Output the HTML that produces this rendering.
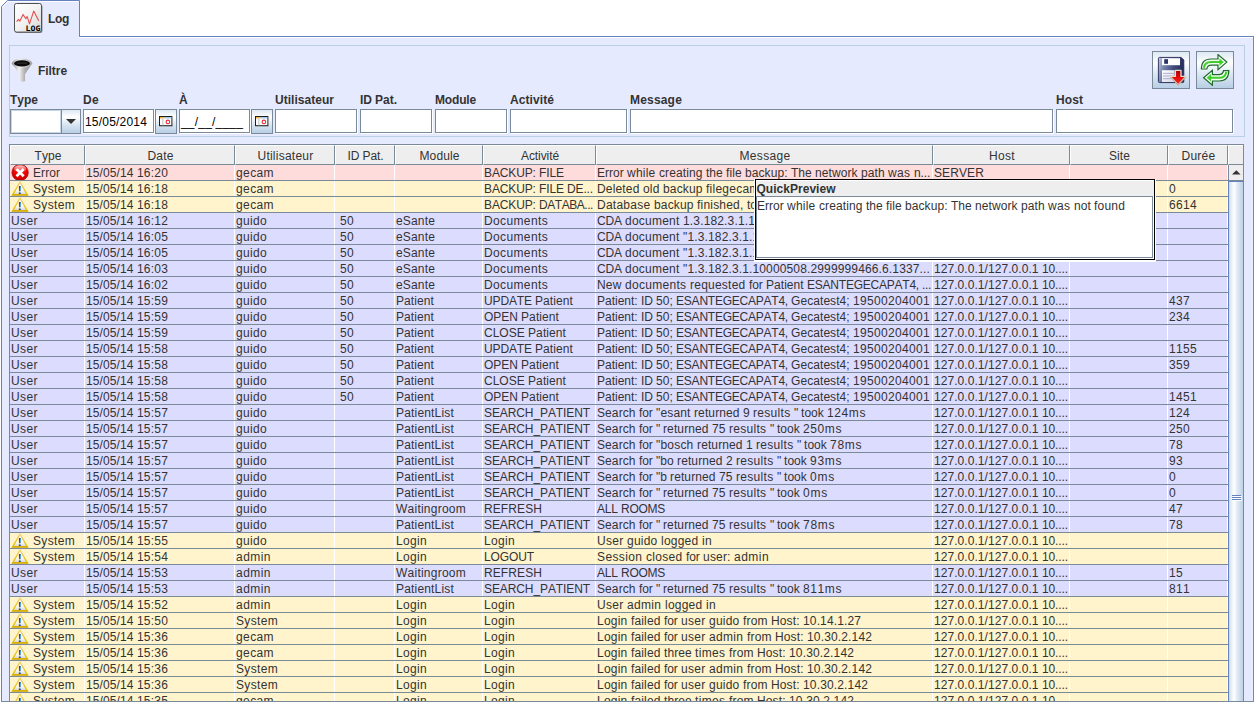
<!DOCTYPE html>
<html><head><meta charset="utf-8"><title>Log</title>
<style>
html,body{margin:0;padding:0;}
body{width:1254px;height:702px;overflow:hidden;background:#fff;position:relative;font-family:"Liberation Sans",Arial,sans-serif;font-size:12px;color:#333333;font-kerning:none;}
.abs{position:absolute;}
#content{position:absolute;left:1px;top:36px;width:1251px;height:664px;background:#e6eaff;border:1px solid #6382bf;border-right-color:#7a8a99;border-bottom-color:#7a8a99;box-sizing:content-box;}
#tab{position:absolute;left:0;top:0;width:81px;height:38px;}
.b{font-weight:bold;}
.lbl{position:absolute;font-weight:bold;white-space:nowrap;line-height:14px;height:14px;}
.tf{position:absolute;top:109px;height:24px;box-sizing:border-box;background:#fff;border:1px solid #7a8a99;box-shadow:1px 1px 0 #fff; }
.tf span{position:absolute;color:#000;left:1px;top:5px;line-height:14px;white-space:pre;}
.btn{position:absolute;box-sizing:border-box;border:1px solid #7a8a99;background:linear-gradient(to bottom,#dde8f3 0%,#ffffff 30%,#dde8f3 60%,#b8cfe5 100%);}
#filter{position:absolute;left:9px;top:45px;width:1234px;height:90px;border:1px solid #b8cfe5;}
#sp{position:absolute;left:9px;top:144px;width:1233px;height:600px;border:1px solid #7a8a99;background:#fff;}
.hc{position:absolute;top:145px;height:20px;box-sizing:border-box;background:#eee;border-top:1px solid #fff;border-left:1px solid #fff;border-bottom:1px solid #7a8a99;border-right:1px solid #7a8a99;text-align:center;line-height:20px;white-space:nowrap;overflow:hidden;padding-left:1px;}
.row{position:absolute;left:10px;width:1218px;height:15px;border-bottom:1px solid #7a8a99;overflow:hidden;}
.c{position:absolute;top:0;height:15px;line-height:17px;white-space:pre;overflow:hidden;box-sizing:border-box;padding-left:1px;border-right:1px solid #fff;}
.ticon{position:absolute;}
i{font-style:normal;}
</style></head><body>

<div id="content"></div>
<div class="abs" style="left:79px;top:37px;width:1174px;height:1px;background:#fff;"></div>
<svg id="tab" viewBox="0 0 81 38" width="81" height="38"><path d="M1.5 38 V6.5 L7.5 0.5 H79.5 V36.5" fill="#e6eaff" stroke="#6382bf" stroke-width="1"/><path d="M2.6 7.4 L8 1.5 H78.5" fill="none" stroke="#fff" stroke-opacity="0.9" stroke-width="1"/><rect x="2" y="36" width="77" height="2" fill="#e6eaff"/></svg>
<svg class="abs" style="left:13px;top:2px" width="31" height="33" viewBox="0 0 31 33">
<defs><linearGradient id="lg1" x1="0" y1="0" x2="1" y2="1"><stop offset="0" stop-color="#ffffff"/><stop offset="0.5" stop-color="#f2f2f2"/><stop offset="1" stop-color="#d4d4d4"/></linearGradient></defs>
<rect x="2.3" y="2.4" width="27.2" height="28.7" rx="2.2" fill="#555" opacity="0.6"/>
<rect x="1.5" y="1.5" width="27" height="28.6" rx="2" fill="url(#lg1)" stroke="#505050" stroke-width="1"/>
<polyline points="3.6,19.8 5.4,17.4 6.9,19.1 10.1,12.4 12.8,16.8 14.1,14.4 16.5,21.8 20.7,9.1 25.7,18.8" fill="none" stroke="#e43c3c" stroke-width="1.05" stroke-linejoin="round" stroke-opacity="0.92"/>
<text x="12.6" y="28.9" font-family="DejaVu Sans Mono, Liberation Mono, monospace" font-weight="bold" font-size="7.5" fill="#000" textLength="15" lengthAdjust="spacingAndGlyphs">LOG</text>
</svg>
<div class="lbl" style="left:48px;top:12px;letter-spacing:-0.33px;">Log</div>
<div id="filter"></div>
<svg class="abs" style="left:10px;top:57px" width="24" height="26" viewBox="0 0 24 26">
<defs><linearGradient id="fg" x1="0" y1="0" x2="1" y2="0"><stop offset="0" stop-color="#8a8a8a"/><stop offset="0.35" stop-color="#f4f4f4"/><stop offset="0.62" stop-color="#b4b4b4"/><stop offset="1" stop-color="#8c8c8c"/></linearGradient>
<linearGradient id="fg2" x1="0" y1="0" x2="1" y2="0"><stop offset="0" stop-color="#9a9a9a"/><stop offset="0.4" stop-color="#eeeeee"/><stop offset="1" stop-color="#a0a0a0"/></linearGradient></defs>
<path d="M2 6.4 L9.8 17.2 V23.9 Q12.4 25.6 15.1 23.9 V17.2 L22 6.4 Z" fill="url(#fg)"/>
<ellipse cx="12" cy="6.2" rx="10.2" ry="4.6" fill="url(#fg2)"/>
<ellipse cx="12" cy="6.4" rx="7.9" ry="3.1" fill="#0a0a0a"/>
<path d="M7 6.1 H17" stroke="#555" stroke-width="0.6"/>
</svg>
<div class="lbl" style="left:38px;top:64px;letter-spacing:-0.056px;">Filtre</div>
<div class="btn" style="left:1152px;top:51px;width:38px;height:38px;"><svg class="abs" style="left:4px;top:4px" width="30" height="30" viewBox="0 0 30 30">
<defs><linearGradient id="fl" x1="0" y1="0" x2="1" y2="0.25"><stop offset="0" stop-color="#c4c8dc"/><stop offset="0.1" stop-color="#aab2cc"/><stop offset="0.3" stop-color="#7482aa"/><stop offset="0.65" stop-color="#424c7c"/><stop offset="1" stop-color="#262c5c"/></linearGradient>
<linearGradient id="ra" x1="0" y1="0" x2="0" y2="1"><stop offset="0" stop-color="#a80000"/><stop offset="0.45" stop-color="#e00808"/><stop offset="1" stop-color="#ff3030"/></linearGradient>
<linearGradient id="ll" x1="0" y1="0" x2="1" y2="1"><stop offset="0" stop-color="#ffffff"/><stop offset="1" stop-color="#d4d6e4"/></linearGradient></defs>
<path d="M1.4 2.6 Q1.4 1.4 2.6 1.4 H24.2 L26.8 4 V25.4 Q26.8 26.6 25.6 26.6 H2.6 Q1.4 26.6 1.4 25.4 Z" fill="url(#fl)" stroke="#26285a" stroke-width="0.9"/>
<rect x="5" y="2.2" width="18" height="7" fill="#fff"/>
<rect x="7.2" y="3.2" width="3.8" height="4.6" fill="#2a3366"/>
<rect x="5" y="14.2" width="12.6" height="11.8" fill="url(#ll)"/>
<path d="M6 17.4 H17 M6 20 H17 M6 22.7 H17" stroke="#a8a8d0" stroke-width="0.9"/>
<path d="M18.4 14.4 H24 V20.4 H28.8 L21.1 29 L13.4 20.4 H18.4 Z" fill="url(#ra)" stroke="#e8dcc8" stroke-width="1.3" stroke-linejoin="round"/>
<path d="M13.6 21 L21.1 29.3 L28.6 21" fill="none" stroke="#8a6a40" stroke-width="0.7" stroke-opacity="0.7"/>
</svg></div>
<div class="btn" style="left:1196px;top:51px;width:38px;height:38px;"><svg class="abs" style="left:2px;top:2px" width="32" height="32" viewBox="0 0 32 32">
<g fill="#f2fff2" stroke="#1d6a2a" stroke-width="1.2" stroke-linejoin="miter">
<path d="M2.4 15 Q2.4 5 12 5 H19 V0.6 L27.8 8.1 L19 15.6 V11.2 H12.5 Q8.4 11.2 7.8 15 Z"/>
<path d="M29.8 16.6 Q29.8 27 20.2 27 H13.4 V31.2 L4.6 23.7 L13.4 16.2 V20.6 H19.8 Q24 20.6 24.5 16.6 Z"/>
</g>
<g fill="none" stroke="#3fcf2a" stroke-width="2">
<path d="M5 13.8 Q5.6 8.1 12 8.1 H21"/>
<path d="M27.2 17.8 Q26.6 23.7 20.2 23.7 H11.4"/>
</g>
<path d="M20.4 4.4 L24.8 8.1 L20.4 11.8 Z" fill="#3fcf2a"/>
<path d="M12 20 L7.6 23.7 L12 27.4 Z" fill="#3fcf2a"/>
</svg></div>
<div class="lbl" style="left:10px;top:93px;">Type</div>
<div class="lbl" style="left:83px;top:93px;letter-spacing:0.33px;">De</div>
<div class="lbl" style="left:179px;top:93px;letter-spacing:0.334px;">À</div>
<div class="lbl" style="left:275px;top:93px;letter-spacing:0.029px;">Utilisateur</div>
<div class="lbl" style="left:360px;top:93px;"><i style="letter-spacing:-0.111px">ID </i>Pat.</div>
<div class="lbl" style="left:435px;top:93px;letter-spacing:-0.166px;">Module</div>
<div class="lbl" style="left:510px;top:93px;letter-spacing:0.082px;">Activité</div>
<div class="lbl" style="left:630px;top:93px;letter-spacing:0.186px;">Message</div>
<div class="lbl" style="left:1056px;top:93px;letter-spacing:0.083px;">Host</div>
<div class="abs" style="left:10px;top:109px;width:71px;height:25px;box-sizing:border-box;border:1px solid #7a8a99;background:#fff;"><div class="abs" style="left:0;top:0;width:50px;height:23px;box-shadow:inset 0 0 0 1px #c4d6e8;"></div><div class="abs" style="left:50px;top:0;width:18px;height:23px;border-left:1px solid #7a8a99;background:linear-gradient(to bottom,#dde8f3 0%,#ffffff 30%,#dde8f3 60%,#b8cfe5 100%);"><svg class="abs" style="left:4px;top:9px" width="10" height="5"><path d="M0 0 H10 L5 5 Z" fill="#333"/></svg></div></div>
<div class="tf" style="left:83px;width:71px;"><span style="letter-spacing:0.194px;">15/05/2014</span></div>
<div class="btn" style="left:155px;top:109px;width:22px;height:25px;"><svg class="abs" style="left:3px;top:6px" width="15" height="12" viewBox="0 0 15 12"><rect x="0.5" y="0.5" width="12.4" height="9.2" fill="#fff" stroke="#1e1e1e" stroke-width="1"/><rect x="1" y="1" width="4.4" height="1.5" fill="#f5b63c"/><rect x="5.4" y="1" width="7" height="1.5" fill="#a4c8ee"/><rect x="3" y="2.8" width="1.5" height="6.4" fill="#d4d4d4"/><circle cx="8.9" cy="5.9" r="1.75" fill="none" stroke="#e8343c" stroke-width="1.15"/><path d="M1 10.6 H13.6" stroke="#9aa" stroke-width="0.7" opacity="0.7"/></svg></div>
<div class="tf" style="left:179px;width:71px;"><span style="letter-spacing:0.194px;">__/__/____</span></div>
<div class="btn" style="left:251px;top:109px;width:22px;height:25px;"><svg class="abs" style="left:3px;top:6px" width="15" height="12" viewBox="0 0 15 12"><rect x="0.5" y="0.5" width="12.4" height="9.2" fill="#fff" stroke="#1e1e1e" stroke-width="1"/><rect x="1" y="1" width="4.4" height="1.5" fill="#f5b63c"/><rect x="5.4" y="1" width="7" height="1.5" fill="#a4c8ee"/><rect x="3" y="2.8" width="1.5" height="6.4" fill="#d4d4d4"/><circle cx="8.9" cy="5.9" r="1.75" fill="none" stroke="#e8343c" stroke-width="1.15"/><path d="M1 10.6 H13.6" stroke="#9aa" stroke-width="0.7" opacity="0.7"/></svg></div>
<div class="tf" style="left:275px;width:82px;"></div>
<div class="tf" style="left:360px;width:72px;"></div>
<div class="tf" style="left:435px;width:72px;"></div>
<div class="tf" style="left:510px;width:117px;"></div>
<div class="tf" style="left:630px;width:423px;"></div>
<div class="tf" style="left:1056px;width:177px;"></div>
<div id="sp"></div>
<div class="hc" style="left:10px;width:75px;letter-spacing:0.081px;">Type</div>
<div class="hc" style="left:85px;width:150px;letter-spacing:0.163px;">Date</div>
<div class="hc" style="left:235px;width:100px;letter-spacing:0.241px;">Utilisateur</div>
<div class="hc" style="left:335px;width:60px;"><i style="letter-spacing:-0.111px">ID </i><i style="letter-spacing:-0.086px">Pat.</i></div>
<div class="hc" style="left:395px;width:88px;letter-spacing:0.107px;">Module</div>
<div class="hc" style="left:483px;width:113px;letter-spacing:-0.085px;">Activité</div>
<div class="hc" style="left:596px;width:337px;letter-spacing:0.33px;">Message</div>
<div class="hc" style="left:933px;width:137px;letter-spacing:0.332px;">Host</div>
<div class="hc" style="left:1070px;width:98px;letter-spacing:0.081px;">Site</div>
<div class="hc" style="left:1168px;width:60px;letter-spacing:0.263px;">Durée</div>
<div class="hc" style="left:1228px;width:15px;border-right:none;"></div>
<div class="row" style="top:165px;background:#ffdcdc;">
<div class="c" style="left:0px;width:75px;padding-left:23px;letter-spacing:0.067px;"><svg class="ticon" width="19" height="16" viewBox="0 0 19 16" style="left:1px;top:0"><defs><radialGradient id="rg" cx="0.5" cy="0.3" r="0.75"><stop offset="0" stop-color="#ff2a2a"/><stop offset="0.55" stop-color="#ee0000"/><stop offset="1" stop-color="#b40000"/></radialGradient><linearGradient id="rh" x1="0" y1="0" x2="0" y2="1"><stop offset="0" stop-color="#fff" stop-opacity="0.75"/><stop offset="1" stop-color="#fff" stop-opacity="0"/></linearGradient></defs><circle cx="9.1" cy="7.5" r="8.2" fill="url(#rg)" stroke="#9c1414" stroke-width="0.8"/><ellipse cx="9.1" cy="3.9" rx="6.2" ry="3.6" fill="url(#rh)"/><path d="M5.5 4 L12.7 11.2 M12.7 4 L5.5 11.2" stroke="#fff" stroke-width="2.7" stroke-linecap="butt"/></svg>Error</div>
<div class="c" style="left:75px;width:150px;padding-left:1px;"><i style="letter-spacing:0.106px">15/05/14 </i><i style="letter-spacing:0.194px">16:20</i></div>
<div class="c" style="left:225px;width:100px;padding-left:1px;letter-spacing:0.396px;">gecam</div>
<div class="c" style="left:325px;width:60px;padding-left:5px;"></div>
<div class="c" style="left:385px;width:88px;padding-left:1px;"></div>
<div class="c" style="left:473px;width:113px;padding-left:1px;"><i style="letter-spacing:-0.127px">BACKUP: </i><i style="letter-spacing:-0.085px">FILE</i></div>
<div class="c" style="left:586px;width:337px;padding-left:1px;">Error <i style="letter-spacing:0.22px">while </i><i style="letter-spacing:0.108px">creating </i>the <i style="letter-spacing:0.065px">file </i><i style="letter-spacing:0.08px">backup: </i>The <i style="letter-spacing:0.081px">network </i><i style="letter-spacing:0.062px">path </i><i style="letter-spacing:0.332px">was </i><i style="letter-spacing:-0.169px">n...</i></div>
<div class="c" style="left:923px;width:137px;padding-left:1px;letter-spacing:0.109px;">SERVER</div>
<div class="c" style="left:1060px;width:98px;padding-left:1px;"></div>
<div class="c" style="left:1158px;width:60px;padding-left:1px;"></div>
</div>
<div class="row" style="top:181px;background:#fff4cc;">
<div class="c" style="left:0px;width:75px;padding-left:23px;letter-spacing:0.332px;"><svg class="ticon" width="19" height="15" viewBox="0 0 19 15" style="left:1px;top:0"><defs><linearGradient id="wg" x1="0" y1="0" x2="0" y2="1"><stop offset="0" stop-color="#f2dc90"/><stop offset="0.5" stop-color="#ecc838"/><stop offset="0.85" stop-color="#e8c000"/><stop offset="1" stop-color="#c89a00"/></linearGradient><linearGradient id="wi" x1="0" y1="0" x2="0" y2="1"><stop offset="0" stop-color="#ffffff"/><stop offset="0.6" stop-color="#ffffff"/><stop offset="1" stop-color="#d8d8d8"/></linearGradient></defs><path d="M9 -0.4 L17.6 14.8 L0.4 14.8 Z" fill="url(#wg)"/><path d="M9 2.6 L15 12.9 L3 12.9 Z" fill="url(#wi)"/><text x="9" y="12.5" font-family="Liberation Sans, sans-serif" font-weight="bold" font-size="10.5" text-anchor="middle" fill="#2a2a2a">!</text></svg>System</div>
<div class="c" style="left:75px;width:150px;padding-left:1px;"><i style="letter-spacing:0.106px">15/05/14 </i><i style="letter-spacing:0.194px">16:18</i></div>
<div class="c" style="left:225px;width:100px;padding-left:1px;letter-spacing:0.396px;">gecam</div>
<div class="c" style="left:325px;width:60px;padding-left:5px;"></div>
<div class="c" style="left:385px;width:88px;padding-left:1px;"></div>
<div class="c" style="left:473px;width:113px;padding-left:1px;"><i style="letter-spacing:-0.127px">BACKUP: </i><i style="letter-spacing:-0.135px">FILE </i><i style="letter-spacing:-0.134px">DE...</i></div>
<div class="c" style="left:586px;width:337px;padding-left:1px;"><i style="letter-spacing:0.163px">Deleted </i><i style="letter-spacing:0.163px">old </i><i style="letter-spacing:0.139px">backup </i><i style="letter-spacing:0.243px">filegecam_backup_2014-05-08.zip</i></div>
<div class="c" style="left:923px;width:137px;padding-left:1px;"></div>
<div class="c" style="left:1060px;width:98px;padding-left:1px;"></div>
<div class="c" style="left:1158px;width:60px;padding-left:1px;letter-spacing:0.326px;">0</div>
</div>
<div class="row" style="top:197px;background:#fff4cc;">
<div class="c" style="left:0px;width:75px;padding-left:23px;letter-spacing:0.332px;"><svg class="ticon" width="19" height="15" viewBox="0 0 19 15" style="left:1px;top:0"><defs><linearGradient id="wg" x1="0" y1="0" x2="0" y2="1"><stop offset="0" stop-color="#f2dc90"/><stop offset="0.5" stop-color="#ecc838"/><stop offset="0.85" stop-color="#e8c000"/><stop offset="1" stop-color="#c89a00"/></linearGradient><linearGradient id="wi" x1="0" y1="0" x2="0" y2="1"><stop offset="0" stop-color="#ffffff"/><stop offset="0.6" stop-color="#ffffff"/><stop offset="1" stop-color="#d8d8d8"/></linearGradient></defs><path d="M9 -0.4 L17.6 14.8 L0.4 14.8 Z" fill="url(#wg)"/><path d="M9 2.6 L15 12.9 L3 12.9 Z" fill="url(#wi)"/><text x="9" y="12.5" font-family="Liberation Sans, sans-serif" font-weight="bold" font-size="10.5" text-anchor="middle" fill="#2a2a2a">!</text></svg>System</div>
<div class="c" style="left:75px;width:150px;padding-left:1px;"><i style="letter-spacing:0.106px">15/05/14 </i><i style="letter-spacing:0.194px">16:18</i></div>
<div class="c" style="left:225px;width:100px;padding-left:1px;letter-spacing:0.396px;">gecam</div>
<div class="c" style="left:325px;width:60px;padding-left:5px;"></div>
<div class="c" style="left:385px;width:88px;padding-left:1px;"></div>
<div class="c" style="left:473px;width:113px;padding-left:1px;"><i style="letter-spacing:-0.127px">BACKUP: </i><i style="letter-spacing:-0.446px">DATABA...</i></div>
<div class="c" style="left:586px;width:337px;padding-left:1px;"><i style="letter-spacing:0.255px">Database </i><i style="letter-spacing:0.139px">backup </i><i style="letter-spacing:0.197px">finished, </i>took <i style="letter-spacing:0.194px">6614 </i><i style="letter-spacing:1.002px">ms</i></div>
<div class="c" style="left:923px;width:137px;padding-left:1px;"></div>
<div class="c" style="left:1060px;width:98px;padding-left:1px;"></div>
<div class="c" style="left:1158px;width:60px;padding-left:1px;letter-spacing:0.326px;">6614</div>
</div>
<div class="row" style="top:213px;background:#dcdcff;">
<div class="c" style="left:0px;width:75px;padding-left:1px;letter-spacing:0.416px;">User</div>
<div class="c" style="left:75px;width:150px;padding-left:1px;"><i style="letter-spacing:0.106px">15/05/14 </i><i style="letter-spacing:0.194px">16:12</i></div>
<div class="c" style="left:225px;width:100px;padding-left:1px;letter-spacing:0.328px;">guido</div>
<div class="c" style="left:325px;width:60px;padding-left:5px;letter-spacing:0.326px;">50</div>
<div class="c" style="left:385px;width:88px;padding-left:1px;letter-spacing:0.161px;">eSante</div>
<div class="c" style="left:473px;width:113px;padding-left:1px;letter-spacing:0.368px;">Documents</div>
<div class="c" style="left:586px;width:337px;padding-left:1px;"><i style="letter-spacing:-0.167px">CDA </i><i style="letter-spacing:0.219px">document </i><i style="letter-spacing:0.149px">1.3.182.3.1.10000508.2999999466.6.1337...</i></div>
<div class="c" style="left:923px;width:137px;padding-left:1px;"><i style="letter-spacing:0.062px">127.0.0.1/127.0.0.1 </i><i style="letter-spacing:-0.114px">10....</i></div>
<div class="c" style="left:1060px;width:98px;padding-left:1px;"></div>
<div class="c" style="left:1158px;width:60px;padding-left:1px;"></div>
</div>
<div class="row" style="top:229px;background:#dcdcff;">
<div class="c" style="left:0px;width:75px;padding-left:1px;letter-spacing:0.416px;">User</div>
<div class="c" style="left:75px;width:150px;padding-left:1px;"><i style="letter-spacing:0.106px">15/05/14 </i><i style="letter-spacing:0.194px">16:05</i></div>
<div class="c" style="left:225px;width:100px;padding-left:1px;letter-spacing:0.328px;">guido</div>
<div class="c" style="left:325px;width:60px;padding-left:5px;letter-spacing:0.326px;">50</div>
<div class="c" style="left:385px;width:88px;padding-left:1px;letter-spacing:0.161px;">eSante</div>
<div class="c" style="left:473px;width:113px;padding-left:1px;letter-spacing:0.368px;">Documents</div>
<div class="c" style="left:586px;width:337px;padding-left:1px;"><i style="letter-spacing:-0.167px">CDA </i><i style="letter-spacing:0.219px">document </i><i style="letter-spacing:0.139px">"1.3.182.3.1.10000508.2999999466.6.1337...</i></div>
<div class="c" style="left:923px;width:137px;padding-left:1px;"><i style="letter-spacing:0.062px">127.0.0.1/127.0.0.1 </i><i style="letter-spacing:-0.114px">10....</i></div>
<div class="c" style="left:1060px;width:98px;padding-left:1px;"></div>
<div class="c" style="left:1158px;width:60px;padding-left:1px;"></div>
</div>
<div class="row" style="top:245px;background:#dcdcff;">
<div class="c" style="left:0px;width:75px;padding-left:1px;letter-spacing:0.416px;">User</div>
<div class="c" style="left:75px;width:150px;padding-left:1px;"><i style="letter-spacing:0.106px">15/05/14 </i><i style="letter-spacing:0.194px">16:05</i></div>
<div class="c" style="left:225px;width:100px;padding-left:1px;letter-spacing:0.328px;">guido</div>
<div class="c" style="left:325px;width:60px;padding-left:5px;letter-spacing:0.326px;">50</div>
<div class="c" style="left:385px;width:88px;padding-left:1px;letter-spacing:0.161px;">eSante</div>
<div class="c" style="left:473px;width:113px;padding-left:1px;letter-spacing:0.368px;">Documents</div>
<div class="c" style="left:586px;width:337px;padding-left:1px;"><i style="letter-spacing:-0.167px">CDA </i><i style="letter-spacing:0.219px">document </i><i style="letter-spacing:0.139px">"1.3.182.3.1.10000508.2999999466.6.1337...</i></div>
<div class="c" style="left:923px;width:137px;padding-left:1px;"><i style="letter-spacing:0.062px">127.0.0.1/127.0.0.1 </i><i style="letter-spacing:-0.114px">10....</i></div>
<div class="c" style="left:1060px;width:98px;padding-left:1px;"></div>
<div class="c" style="left:1158px;width:60px;padding-left:1px;"></div>
</div>
<div class="row" style="top:261px;background:#dcdcff;">
<div class="c" style="left:0px;width:75px;padding-left:1px;letter-spacing:0.416px;">User</div>
<div class="c" style="left:75px;width:150px;padding-left:1px;"><i style="letter-spacing:0.106px">15/05/14 </i><i style="letter-spacing:0.194px">16:03</i></div>
<div class="c" style="left:225px;width:100px;padding-left:1px;letter-spacing:0.328px;">guido</div>
<div class="c" style="left:325px;width:60px;padding-left:5px;letter-spacing:0.326px;">50</div>
<div class="c" style="left:385px;width:88px;padding-left:1px;letter-spacing:0.161px;">eSante</div>
<div class="c" style="left:473px;width:113px;padding-left:1px;letter-spacing:0.368px;">Documents</div>
<div class="c" style="left:586px;width:337px;padding-left:1px;"><i style="letter-spacing:-0.167px">CDA </i><i style="letter-spacing:0.219px">document </i><i style="letter-spacing:0.139px">"1.3.182.3.1.10000508.2999999466.6.1337...</i></div>
<div class="c" style="left:923px;width:137px;padding-left:1px;"><i style="letter-spacing:0.062px">127.0.0.1/127.0.0.1 </i><i style="letter-spacing:-0.114px">10....</i></div>
<div class="c" style="left:1060px;width:98px;padding-left:1px;"></div>
<div class="c" style="left:1158px;width:60px;padding-left:1px;"></div>
</div>
<div class="row" style="top:277px;background:#dcdcff;">
<div class="c" style="left:0px;width:75px;padding-left:1px;letter-spacing:0.416px;">User</div>
<div class="c" style="left:75px;width:150px;padding-left:1px;"><i style="letter-spacing:0.106px">15/05/14 </i><i style="letter-spacing:0.194px">16:02</i></div>
<div class="c" style="left:225px;width:100px;padding-left:1px;letter-spacing:0.328px;">guido</div>
<div class="c" style="left:325px;width:60px;padding-left:5px;letter-spacing:0.326px;">50</div>
<div class="c" style="left:385px;width:88px;padding-left:1px;letter-spacing:0.161px;">eSante</div>
<div class="c" style="left:473px;width:113px;padding-left:1px;letter-spacing:0.368px;">Documents</div>
<div class="c" style="left:586px;width:337px;padding-left:1px;"><i style="letter-spacing:0.165px">New </i><i style="letter-spacing:0.297px">documents </i><i style="letter-spacing:0.229px">requested </i><i style="letter-spacing:-0.084px">for </i><i style="letter-spacing:0.038px">Patient </i><i style="letter-spacing:-0.231px">ESANTEGECAPAT4, </i><i style="letter-spacing:-0.334px">...</i></div>
<div class="c" style="left:923px;width:137px;padding-left:1px;"><i style="letter-spacing:0.062px">127.0.0.1/127.0.0.1 </i><i style="letter-spacing:-0.114px">10....</i></div>
<div class="c" style="left:1060px;width:98px;padding-left:1px;"></div>
<div class="c" style="left:1158px;width:60px;padding-left:1px;"></div>
</div>
<div class="row" style="top:293px;background:#dcdcff;">
<div class="c" style="left:0px;width:75px;padding-left:1px;letter-spacing:0.416px;">User</div>
<div class="c" style="left:75px;width:150px;padding-left:1px;"><i style="letter-spacing:0.106px">15/05/14 </i><i style="letter-spacing:0.194px">15:59</i></div>
<div class="c" style="left:225px;width:100px;padding-left:1px;letter-spacing:0.328px;">guido</div>
<div class="c" style="left:325px;width:60px;padding-left:5px;letter-spacing:0.326px;">50</div>
<div class="c" style="left:385px;width:88px;padding-left:1px;letter-spacing:0.092px;">Patient</div>
<div class="c" style="left:473px;width:113px;padding-left:1px;"><i style="letter-spacing:-0.144px">UPDATE </i><i style="letter-spacing:0.092px">Patient</i></div>
<div class="c" style="left:586px;width:337px;padding-left:1px;">Patient: <i style="letter-spacing:-0.111px">ID </i>50; <i style="letter-spacing:-0.231px">ESANTEGECAPAT4, </i><i style="letter-spacing:0.058px">Gecatest4; </i><i style="letter-spacing:0.326px">19500204001</i></div>
<div class="c" style="left:923px;width:137px;padding-left:1px;"><i style="letter-spacing:0.062px">127.0.0.1/127.0.0.1 </i><i style="letter-spacing:-0.114px">10....</i></div>
<div class="c" style="left:1060px;width:98px;padding-left:1px;"></div>
<div class="c" style="left:1158px;width:60px;padding-left:1px;letter-spacing:0.326px;">437</div>
</div>
<div class="row" style="top:309px;background:#dcdcff;">
<div class="c" style="left:0px;width:75px;padding-left:1px;letter-spacing:0.416px;">User</div>
<div class="c" style="left:75px;width:150px;padding-left:1px;"><i style="letter-spacing:0.106px">15/05/14 </i><i style="letter-spacing:0.194px">15:59</i></div>
<div class="c" style="left:225px;width:100px;padding-left:1px;letter-spacing:0.328px;">guido</div>
<div class="c" style="left:325px;width:60px;padding-left:5px;letter-spacing:0.326px;">50</div>
<div class="c" style="left:385px;width:88px;padding-left:1px;letter-spacing:0.092px;">Patient</div>
<div class="c" style="left:473px;width:113px;padding-left:1px;"><i style="letter-spacing:-0.068px">OPEN </i><i style="letter-spacing:0.092px">Patient</i></div>
<div class="c" style="left:586px;width:337px;padding-left:1px;">Patient: <i style="letter-spacing:-0.111px">ID </i>50; <i style="letter-spacing:-0.231px">ESANTEGECAPAT4, </i><i style="letter-spacing:0.058px">Gecatest4; </i><i style="letter-spacing:0.326px">19500204001</i></div>
<div class="c" style="left:923px;width:137px;padding-left:1px;"><i style="letter-spacing:0.062px">127.0.0.1/127.0.0.1 </i><i style="letter-spacing:-0.114px">10....</i></div>
<div class="c" style="left:1060px;width:98px;padding-left:1px;"></div>
<div class="c" style="left:1158px;width:60px;padding-left:1px;letter-spacing:0.326px;">234</div>
</div>
<div class="row" style="top:325px;background:#dcdcff;">
<div class="c" style="left:0px;width:75px;padding-left:1px;letter-spacing:0.416px;">User</div>
<div class="c" style="left:75px;width:150px;padding-left:1px;"><i style="letter-spacing:0.106px">15/05/14 </i><i style="letter-spacing:0.194px">15:59</i></div>
<div class="c" style="left:225px;width:100px;padding-left:1px;letter-spacing:0.328px;">guido</div>
<div class="c" style="left:325px;width:60px;padding-left:5px;letter-spacing:0.326px;">50</div>
<div class="c" style="left:385px;width:88px;padding-left:1px;letter-spacing:0.092px;">Patient</div>
<div class="c" style="left:473px;width:113px;padding-left:1px;">CLOSE <i style="letter-spacing:0.092px">Patient</i></div>
<div class="c" style="left:586px;width:337px;padding-left:1px;">Patient: <i style="letter-spacing:-0.111px">ID </i>50; <i style="letter-spacing:-0.231px">ESANTEGECAPAT4, </i><i style="letter-spacing:0.058px">Gecatest4; </i><i style="letter-spacing:0.326px">19500204001</i></div>
<div class="c" style="left:923px;width:137px;padding-left:1px;"><i style="letter-spacing:0.062px">127.0.0.1/127.0.0.1 </i><i style="letter-spacing:-0.114px">10....</i></div>
<div class="c" style="left:1060px;width:98px;padding-left:1px;"></div>
<div class="c" style="left:1158px;width:60px;padding-left:1px;"></div>
</div>
<div class="row" style="top:341px;background:#dcdcff;">
<div class="c" style="left:0px;width:75px;padding-left:1px;letter-spacing:0.416px;">User</div>
<div class="c" style="left:75px;width:150px;padding-left:1px;"><i style="letter-spacing:0.106px">15/05/14 </i><i style="letter-spacing:0.194px">15:58</i></div>
<div class="c" style="left:225px;width:100px;padding-left:1px;letter-spacing:0.328px;">guido</div>
<div class="c" style="left:325px;width:60px;padding-left:5px;letter-spacing:0.326px;">50</div>
<div class="c" style="left:385px;width:88px;padding-left:1px;letter-spacing:0.092px;">Patient</div>
<div class="c" style="left:473px;width:113px;padding-left:1px;"><i style="letter-spacing:-0.144px">UPDATE </i><i style="letter-spacing:0.092px">Patient</i></div>
<div class="c" style="left:586px;width:337px;padding-left:1px;">Patient: <i style="letter-spacing:-0.111px">ID </i>50; <i style="letter-spacing:-0.231px">ESANTEGECAPAT4, </i><i style="letter-spacing:0.058px">Gecatest4; </i><i style="letter-spacing:0.326px">19500204001</i></div>
<div class="c" style="left:923px;width:137px;padding-left:1px;"><i style="letter-spacing:0.062px">127.0.0.1/127.0.0.1 </i><i style="letter-spacing:-0.114px">10....</i></div>
<div class="c" style="left:1060px;width:98px;padding-left:1px;"></div>
<div class="c" style="left:1158px;width:60px;padding-left:1px;letter-spacing:0.326px;">1155</div>
</div>
<div class="row" style="top:357px;background:#dcdcff;">
<div class="c" style="left:0px;width:75px;padding-left:1px;letter-spacing:0.416px;">User</div>
<div class="c" style="left:75px;width:150px;padding-left:1px;"><i style="letter-spacing:0.106px">15/05/14 </i><i style="letter-spacing:0.194px">15:58</i></div>
<div class="c" style="left:225px;width:100px;padding-left:1px;letter-spacing:0.328px;">guido</div>
<div class="c" style="left:325px;width:60px;padding-left:5px;letter-spacing:0.326px;">50</div>
<div class="c" style="left:385px;width:88px;padding-left:1px;letter-spacing:0.092px;">Patient</div>
<div class="c" style="left:473px;width:113px;padding-left:1px;"><i style="letter-spacing:-0.068px">OPEN </i><i style="letter-spacing:0.092px">Patient</i></div>
<div class="c" style="left:586px;width:337px;padding-left:1px;">Patient: <i style="letter-spacing:-0.111px">ID </i>50; <i style="letter-spacing:-0.231px">ESANTEGECAPAT4, </i><i style="letter-spacing:0.058px">Gecatest4; </i><i style="letter-spacing:0.326px">19500204001</i></div>
<div class="c" style="left:923px;width:137px;padding-left:1px;"><i style="letter-spacing:0.062px">127.0.0.1/127.0.0.1 </i><i style="letter-spacing:-0.114px">10....</i></div>
<div class="c" style="left:1060px;width:98px;padding-left:1px;"></div>
<div class="c" style="left:1158px;width:60px;padding-left:1px;letter-spacing:0.326px;">359</div>
</div>
<div class="row" style="top:373px;background:#dcdcff;">
<div class="c" style="left:0px;width:75px;padding-left:1px;letter-spacing:0.416px;">User</div>
<div class="c" style="left:75px;width:150px;padding-left:1px;"><i style="letter-spacing:0.106px">15/05/14 </i><i style="letter-spacing:0.194px">15:58</i></div>
<div class="c" style="left:225px;width:100px;padding-left:1px;letter-spacing:0.328px;">guido</div>
<div class="c" style="left:325px;width:60px;padding-left:5px;letter-spacing:0.326px;">50</div>
<div class="c" style="left:385px;width:88px;padding-left:1px;letter-spacing:0.092px;">Patient</div>
<div class="c" style="left:473px;width:113px;padding-left:1px;">CLOSE <i style="letter-spacing:0.092px">Patient</i></div>
<div class="c" style="left:586px;width:337px;padding-left:1px;">Patient: <i style="letter-spacing:-0.111px">ID </i>50; <i style="letter-spacing:-0.231px">ESANTEGECAPAT4, </i><i style="letter-spacing:0.058px">Gecatest4; </i><i style="letter-spacing:0.326px">19500204001</i></div>
<div class="c" style="left:923px;width:137px;padding-left:1px;"><i style="letter-spacing:0.062px">127.0.0.1/127.0.0.1 </i><i style="letter-spacing:-0.114px">10....</i></div>
<div class="c" style="left:1060px;width:98px;padding-left:1px;"></div>
<div class="c" style="left:1158px;width:60px;padding-left:1px;"></div>
</div>
<div class="row" style="top:389px;background:#dcdcff;">
<div class="c" style="left:0px;width:75px;padding-left:1px;letter-spacing:0.416px;">User</div>
<div class="c" style="left:75px;width:150px;padding-left:1px;"><i style="letter-spacing:0.106px">15/05/14 </i><i style="letter-spacing:0.194px">15:58</i></div>
<div class="c" style="left:225px;width:100px;padding-left:1px;letter-spacing:0.328px;">guido</div>
<div class="c" style="left:325px;width:60px;padding-left:5px;letter-spacing:0.326px;">50</div>
<div class="c" style="left:385px;width:88px;padding-left:1px;letter-spacing:0.092px;">Patient</div>
<div class="c" style="left:473px;width:113px;padding-left:1px;"><i style="letter-spacing:-0.068px">OPEN </i><i style="letter-spacing:0.092px">Patient</i></div>
<div class="c" style="left:586px;width:337px;padding-left:1px;">Patient: <i style="letter-spacing:-0.111px">ID </i>50; <i style="letter-spacing:-0.231px">ESANTEGECAPAT4, </i><i style="letter-spacing:0.058px">Gecatest4; </i><i style="letter-spacing:0.326px">19500204001</i></div>
<div class="c" style="left:923px;width:137px;padding-left:1px;"><i style="letter-spacing:0.062px">127.0.0.1/127.0.0.1 </i><i style="letter-spacing:-0.114px">10....</i></div>
<div class="c" style="left:1060px;width:98px;padding-left:1px;"></div>
<div class="c" style="left:1158px;width:60px;padding-left:1px;letter-spacing:0.326px;">1451</div>
</div>
<div class="row" style="top:405px;background:#dcdcff;">
<div class="c" style="left:0px;width:75px;padding-left:1px;letter-spacing:0.416px;">User</div>
<div class="c" style="left:75px;width:150px;padding-left:1px;"><i style="letter-spacing:0.106px">15/05/14 </i><i style="letter-spacing:0.194px">15:57</i></div>
<div class="c" style="left:225px;width:100px;padding-left:1px;letter-spacing:0.328px;">guido</div>
<div class="c" style="left:325px;width:60px;padding-left:5px;"></div>
<div class="c" style="left:385px;width:88px;padding-left:1px;letter-spacing:0.179px;">PatientList</div>
<div class="c" style="left:473px;width:113px;padding-left:1px;letter-spacing:-0.097px;">SEARCH_PATIENT</div>
<div class="c" style="left:586px;width:337px;padding-left:1px;"><i style="letter-spacing:0.092px">Search </i><i style="letter-spacing:-0.084px">for </i><i style="letter-spacing:0.15px">"esant </i><i style="letter-spacing:0.108px">returned </i>9 <i style="letter-spacing:0.29px">results </i><i style="letter-spacing:-0.297px">" </i>took <i style="letter-spacing:0.596px">124ms</i></div>
<div class="c" style="left:923px;width:137px;padding-left:1px;"><i style="letter-spacing:0.062px">127.0.0.1/127.0.0.1 </i><i style="letter-spacing:-0.114px">10....</i></div>
<div class="c" style="left:1060px;width:98px;padding-left:1px;"></div>
<div class="c" style="left:1158px;width:60px;padding-left:1px;letter-spacing:0.326px;">124</div>
</div>
<div class="row" style="top:421px;background:#dcdcff;">
<div class="c" style="left:0px;width:75px;padding-left:1px;letter-spacing:0.416px;">User</div>
<div class="c" style="left:75px;width:150px;padding-left:1px;"><i style="letter-spacing:0.106px">15/05/14 </i><i style="letter-spacing:0.194px">15:57</i></div>
<div class="c" style="left:225px;width:100px;padding-left:1px;letter-spacing:0.328px;">guido</div>
<div class="c" style="left:325px;width:60px;padding-left:5px;"></div>
<div class="c" style="left:385px;width:88px;padding-left:1px;letter-spacing:0.179px;">PatientList</div>
<div class="c" style="left:473px;width:113px;padding-left:1px;letter-spacing:-0.097px;">SEARCH_PATIENT</div>
<div class="c" style="left:586px;width:337px;padding-left:1px;"><i style="letter-spacing:0.092px">Search </i><i style="letter-spacing:-0.084px">for </i><i style="letter-spacing:-0.297px">" </i><i style="letter-spacing:0.108px">returned </i><i style="letter-spacing:0.106px">75 </i><i style="letter-spacing:0.29px">results </i><i style="letter-spacing:-0.297px">" </i>took <i style="letter-spacing:0.596px">250ms</i></div>
<div class="c" style="left:923px;width:137px;padding-left:1px;"><i style="letter-spacing:0.062px">127.0.0.1/127.0.0.1 </i><i style="letter-spacing:-0.114px">10....</i></div>
<div class="c" style="left:1060px;width:98px;padding-left:1px;"></div>
<div class="c" style="left:1158px;width:60px;padding-left:1px;letter-spacing:0.326px;">250</div>
</div>
<div class="row" style="top:437px;background:#dcdcff;">
<div class="c" style="left:0px;width:75px;padding-left:1px;letter-spacing:0.416px;">User</div>
<div class="c" style="left:75px;width:150px;padding-left:1px;"><i style="letter-spacing:0.106px">15/05/14 </i><i style="letter-spacing:0.194px">15:57</i></div>
<div class="c" style="left:225px;width:100px;padding-left:1px;letter-spacing:0.328px;">guido</div>
<div class="c" style="left:325px;width:60px;padding-left:5px;"></div>
<div class="c" style="left:385px;width:88px;padding-left:1px;letter-spacing:0.179px;">PatientList</div>
<div class="c" style="left:473px;width:113px;padding-left:1px;letter-spacing:-0.097px;">SEARCH_PATIENT</div>
<div class="c" style="left:586px;width:337px;padding-left:1px;"><i style="letter-spacing:0.092px">Search </i><i style="letter-spacing:-0.084px">for </i><i style="letter-spacing:0.198px">"bosch </i><i style="letter-spacing:0.108px">returned </i>1 <i style="letter-spacing:0.29px">results </i><i style="letter-spacing:-0.297px">" </i>took <i style="letter-spacing:0.664px">78ms</i></div>
<div class="c" style="left:923px;width:137px;padding-left:1px;"><i style="letter-spacing:0.062px">127.0.0.1/127.0.0.1 </i><i style="letter-spacing:-0.114px">10....</i></div>
<div class="c" style="left:1060px;width:98px;padding-left:1px;"></div>
<div class="c" style="left:1158px;width:60px;padding-left:1px;letter-spacing:0.326px;">78</div>
</div>
<div class="row" style="top:453px;background:#dcdcff;">
<div class="c" style="left:0px;width:75px;padding-left:1px;letter-spacing:0.416px;">User</div>
<div class="c" style="left:75px;width:150px;padding-left:1px;"><i style="letter-spacing:0.106px">15/05/14 </i><i style="letter-spacing:0.194px">15:57</i></div>
<div class="c" style="left:225px;width:100px;padding-left:1px;letter-spacing:0.328px;">guido</div>
<div class="c" style="left:325px;width:60px;padding-left:5px;"></div>
<div class="c" style="left:385px;width:88px;padding-left:1px;letter-spacing:0.179px;">PatientList</div>
<div class="c" style="left:473px;width:113px;padding-left:1px;letter-spacing:-0.097px;">SEARCH_PATIENT</div>
<div class="c" style="left:586px;width:337px;padding-left:1px;"><i style="letter-spacing:0.092px">Search </i><i style="letter-spacing:-0.084px">for </i><i style="letter-spacing:0.015px">"bo </i><i style="letter-spacing:0.108px">returned </i>2 <i style="letter-spacing:0.29px">results </i><i style="letter-spacing:-0.297px">" </i>took <i style="letter-spacing:0.664px">93ms</i></div>
<div class="c" style="left:923px;width:137px;padding-left:1px;"><i style="letter-spacing:0.062px">127.0.0.1/127.0.0.1 </i><i style="letter-spacing:-0.114px">10....</i></div>
<div class="c" style="left:1060px;width:98px;padding-left:1px;"></div>
<div class="c" style="left:1158px;width:60px;padding-left:1px;letter-spacing:0.326px;">93</div>
</div>
<div class="row" style="top:469px;background:#dcdcff;">
<div class="c" style="left:0px;width:75px;padding-left:1px;letter-spacing:0.416px;">User</div>
<div class="c" style="left:75px;width:150px;padding-left:1px;"><i style="letter-spacing:0.106px">15/05/14 </i><i style="letter-spacing:0.194px">15:57</i></div>
<div class="c" style="left:225px;width:100px;padding-left:1px;letter-spacing:0.328px;">guido</div>
<div class="c" style="left:325px;width:60px;padding-left:5px;"></div>
<div class="c" style="left:385px;width:88px;padding-left:1px;letter-spacing:0.179px;">PatientList</div>
<div class="c" style="left:473px;width:113px;padding-left:1px;letter-spacing:-0.097px;">SEARCH_PATIENT</div>
<div class="c" style="left:586px;width:337px;padding-left:1px;"><i style="letter-spacing:0.092px">Search </i><i style="letter-spacing:-0.084px">for </i><i style="letter-spacing:-0.089px">"b </i><i style="letter-spacing:0.108px">returned </i><i style="letter-spacing:0.106px">75 </i><i style="letter-spacing:0.29px">results </i><i style="letter-spacing:-0.297px">" </i>took <i style="letter-spacing:0.777px">0ms</i></div>
<div class="c" style="left:923px;width:137px;padding-left:1px;"><i style="letter-spacing:0.062px">127.0.0.1/127.0.0.1 </i><i style="letter-spacing:-0.114px">10....</i></div>
<div class="c" style="left:1060px;width:98px;padding-left:1px;"></div>
<div class="c" style="left:1158px;width:60px;padding-left:1px;letter-spacing:0.326px;">0</div>
</div>
<div class="row" style="top:485px;background:#dcdcff;">
<div class="c" style="left:0px;width:75px;padding-left:1px;letter-spacing:0.416px;">User</div>
<div class="c" style="left:75px;width:150px;padding-left:1px;"><i style="letter-spacing:0.106px">15/05/14 </i><i style="letter-spacing:0.194px">15:57</i></div>
<div class="c" style="left:225px;width:100px;padding-left:1px;letter-spacing:0.328px;">guido</div>
<div class="c" style="left:325px;width:60px;padding-left:5px;"></div>
<div class="c" style="left:385px;width:88px;padding-left:1px;letter-spacing:0.179px;">PatientList</div>
<div class="c" style="left:473px;width:113px;padding-left:1px;letter-spacing:-0.097px;">SEARCH_PATIENT</div>
<div class="c" style="left:586px;width:337px;padding-left:1px;"><i style="letter-spacing:0.092px">Search </i><i style="letter-spacing:-0.084px">for </i><i style="letter-spacing:-0.297px">" </i><i style="letter-spacing:0.108px">returned </i><i style="letter-spacing:0.106px">75 </i><i style="letter-spacing:0.29px">results </i><i style="letter-spacing:-0.297px">" </i>took <i style="letter-spacing:0.777px">0ms</i></div>
<div class="c" style="left:923px;width:137px;padding-left:1px;"><i style="letter-spacing:0.062px">127.0.0.1/127.0.0.1 </i><i style="letter-spacing:-0.114px">10....</i></div>
<div class="c" style="left:1060px;width:98px;padding-left:1px;"></div>
<div class="c" style="left:1158px;width:60px;padding-left:1px;letter-spacing:0.326px;">0</div>
</div>
<div class="row" style="top:501px;background:#dcdcff;">
<div class="c" style="left:0px;width:75px;padding-left:1px;letter-spacing:0.416px;">User</div>
<div class="c" style="left:75px;width:150px;padding-left:1px;"><i style="letter-spacing:0.106px">15/05/14 </i><i style="letter-spacing:0.194px">15:57</i></div>
<div class="c" style="left:225px;width:100px;padding-left:1px;letter-spacing:0.328px;">guido</div>
<div class="c" style="left:325px;width:60px;padding-left:5px;"></div>
<div class="c" style="left:385px;width:88px;padding-left:1px;letter-spacing:0.241px;">Waitingroom</div>
<div class="c" style="left:473px;width:113px;padding-left:1px;letter-spacing:0.094px;">REFRESH</div>
<div class="c" style="left:586px;width:337px;padding-left:1px;"><i style="letter-spacing:-0.171px">ALL </i><i style="letter-spacing:-0.267px">ROOMS</i></div>
<div class="c" style="left:923px;width:137px;padding-left:1px;"><i style="letter-spacing:0.062px">127.0.0.1/127.0.0.1 </i><i style="letter-spacing:-0.114px">10....</i></div>
<div class="c" style="left:1060px;width:98px;padding-left:1px;"></div>
<div class="c" style="left:1158px;width:60px;padding-left:1px;letter-spacing:0.326px;">47</div>
</div>
<div class="row" style="top:517px;background:#dcdcff;">
<div class="c" style="left:0px;width:75px;padding-left:1px;letter-spacing:0.416px;">User</div>
<div class="c" style="left:75px;width:150px;padding-left:1px;"><i style="letter-spacing:0.106px">15/05/14 </i><i style="letter-spacing:0.194px">15:57</i></div>
<div class="c" style="left:225px;width:100px;padding-left:1px;letter-spacing:0.328px;">guido</div>
<div class="c" style="left:325px;width:60px;padding-left:5px;"></div>
<div class="c" style="left:385px;width:88px;padding-left:1px;letter-spacing:0.179px;">PatientList</div>
<div class="c" style="left:473px;width:113px;padding-left:1px;letter-spacing:-0.097px;">SEARCH_PATIENT</div>
<div class="c" style="left:586px;width:337px;padding-left:1px;"><i style="letter-spacing:0.092px">Search </i><i style="letter-spacing:-0.084px">for </i><i style="letter-spacing:-0.297px">" </i><i style="letter-spacing:0.108px">returned </i><i style="letter-spacing:0.106px">75 </i><i style="letter-spacing:0.29px">results </i><i style="letter-spacing:-0.297px">" </i>took <i style="letter-spacing:0.664px">78ms</i></div>
<div class="c" style="left:923px;width:137px;padding-left:1px;"><i style="letter-spacing:0.062px">127.0.0.1/127.0.0.1 </i><i style="letter-spacing:-0.114px">10....</i></div>
<div class="c" style="left:1060px;width:98px;padding-left:1px;"></div>
<div class="c" style="left:1158px;width:60px;padding-left:1px;letter-spacing:0.326px;">78</div>
</div>
<div class="row" style="top:533px;background:#fff4cc;">
<div class="c" style="left:0px;width:75px;padding-left:23px;letter-spacing:0.332px;"><svg class="ticon" width="19" height="15" viewBox="0 0 19 15" style="left:1px;top:0"><defs><linearGradient id="wg" x1="0" y1="0" x2="0" y2="1"><stop offset="0" stop-color="#f2dc90"/><stop offset="0.5" stop-color="#ecc838"/><stop offset="0.85" stop-color="#e8c000"/><stop offset="1" stop-color="#c89a00"/></linearGradient><linearGradient id="wi" x1="0" y1="0" x2="0" y2="1"><stop offset="0" stop-color="#ffffff"/><stop offset="0.6" stop-color="#ffffff"/><stop offset="1" stop-color="#d8d8d8"/></linearGradient></defs><path d="M9 -0.4 L17.6 14.8 L0.4 14.8 Z" fill="url(#wg)"/><path d="M9 2.6 L15 12.9 L3 12.9 Z" fill="url(#wi)"/><text x="9" y="12.5" font-family="Liberation Sans, sans-serif" font-weight="bold" font-size="10.5" text-anchor="middle" fill="#2a2a2a">!</text></svg>System</div>
<div class="c" style="left:75px;width:150px;padding-left:1px;"><i style="letter-spacing:0.106px">15/05/14 </i><i style="letter-spacing:0.194px">15:55</i></div>
<div class="c" style="left:225px;width:100px;padding-left:1px;letter-spacing:0.328px;">guido</div>
<div class="c" style="left:325px;width:60px;padding-left:5px;"></div>
<div class="c" style="left:385px;width:88px;padding-left:1px;letter-spacing:0.328px;">Login</div>
<div class="c" style="left:473px;width:113px;padding-left:1px;letter-spacing:0.328px;">Login</div>
<div class="c" style="left:586px;width:337px;padding-left:1px;"><i style="letter-spacing:0.266px">User </i><i style="letter-spacing:0.217px">guido </i><i style="letter-spacing:0.233px">logged </i><i style="letter-spacing:0.33px">in</i></div>
<div class="c" style="left:923px;width:137px;padding-left:1px;"><i style="letter-spacing:0.062px">127.0.0.1/127.0.0.1 </i><i style="letter-spacing:-0.114px">10....</i></div>
<div class="c" style="left:1060px;width:98px;padding-left:1px;"></div>
<div class="c" style="left:1158px;width:60px;padding-left:1px;"></div>
</div>
<div class="row" style="top:549px;background:#fff4cc;">
<div class="c" style="left:0px;width:75px;padding-left:23px;letter-spacing:0.332px;"><svg class="ticon" width="19" height="15" viewBox="0 0 19 15" style="left:1px;top:0"><defs><linearGradient id="wg" x1="0" y1="0" x2="0" y2="1"><stop offset="0" stop-color="#f2dc90"/><stop offset="0.5" stop-color="#ecc838"/><stop offset="0.85" stop-color="#e8c000"/><stop offset="1" stop-color="#c89a00"/></linearGradient><linearGradient id="wi" x1="0" y1="0" x2="0" y2="1"><stop offset="0" stop-color="#ffffff"/><stop offset="0.6" stop-color="#ffffff"/><stop offset="1" stop-color="#d8d8d8"/></linearGradient></defs><path d="M9 -0.4 L17.6 14.8 L0.4 14.8 Z" fill="url(#wg)"/><path d="M9 2.6 L15 12.9 L3 12.9 Z" fill="url(#wi)"/><text x="9" y="12.5" font-family="Liberation Sans, sans-serif" font-weight="bold" font-size="10.5" text-anchor="middle" fill="#2a2a2a">!</text></svg>System</div>
<div class="c" style="left:75px;width:150px;padding-left:1px;"><i style="letter-spacing:0.106px">15/05/14 </i><i style="letter-spacing:0.194px">15:54</i></div>
<div class="c" style="left:225px;width:100px;padding-left:1px;letter-spacing:0.463px;">admin</div>
<div class="c" style="left:325px;width:60px;padding-left:5px;"></div>
<div class="c" style="left:385px;width:88px;padding-left:1px;letter-spacing:0.328px;">Login</div>
<div class="c" style="left:473px;width:113px;padding-left:1px;letter-spacing:-0.112px;">LOGOUT</div>
<div class="c" style="left:586px;width:337px;padding-left:1px;"><i style="letter-spacing:0.372px">Session </i><i style="letter-spacing:0.283px">closed </i><i style="letter-spacing:-0.084px">for </i><i style="letter-spacing:0.165px">user: </i><i style="letter-spacing:0.463px">admin</i></div>
<div class="c" style="left:923px;width:137px;padding-left:1px;"><i style="letter-spacing:0.062px">127.0.0.1/127.0.0.1 </i><i style="letter-spacing:-0.114px">10....</i></div>
<div class="c" style="left:1060px;width:98px;padding-left:1px;"></div>
<div class="c" style="left:1158px;width:60px;padding-left:1px;"></div>
</div>
<div class="row" style="top:565px;background:#dcdcff;">
<div class="c" style="left:0px;width:75px;padding-left:1px;letter-spacing:0.416px;">User</div>
<div class="c" style="left:75px;width:150px;padding-left:1px;"><i style="letter-spacing:0.106px">15/05/14 </i><i style="letter-spacing:0.194px">15:53</i></div>
<div class="c" style="left:225px;width:100px;padding-left:1px;letter-spacing:0.463px;">admin</div>
<div class="c" style="left:325px;width:60px;padding-left:5px;"></div>
<div class="c" style="left:385px;width:88px;padding-left:1px;letter-spacing:0.241px;">Waitingroom</div>
<div class="c" style="left:473px;width:113px;padding-left:1px;letter-spacing:0.094px;">REFRESH</div>
<div class="c" style="left:586px;width:337px;padding-left:1px;"><i style="letter-spacing:-0.171px">ALL </i><i style="letter-spacing:-0.267px">ROOMS</i></div>
<div class="c" style="left:923px;width:137px;padding-left:1px;"><i style="letter-spacing:0.062px">127.0.0.1/127.0.0.1 </i><i style="letter-spacing:-0.114px">10....</i></div>
<div class="c" style="left:1060px;width:98px;padding-left:1px;"></div>
<div class="c" style="left:1158px;width:60px;padding-left:1px;letter-spacing:0.326px;">15</div>
</div>
<div class="row" style="top:581px;background:#dcdcff;">
<div class="c" style="left:0px;width:75px;padding-left:1px;letter-spacing:0.416px;">User</div>
<div class="c" style="left:75px;width:150px;padding-left:1px;"><i style="letter-spacing:0.106px">15/05/14 </i><i style="letter-spacing:0.194px">15:53</i></div>
<div class="c" style="left:225px;width:100px;padding-left:1px;letter-spacing:0.463px;">admin</div>
<div class="c" style="left:325px;width:60px;padding-left:5px;"></div>
<div class="c" style="left:385px;width:88px;padding-left:1px;letter-spacing:0.179px;">PatientList</div>
<div class="c" style="left:473px;width:113px;padding-left:1px;letter-spacing:-0.097px;">SEARCH_PATIENT</div>
<div class="c" style="left:586px;width:337px;padding-left:1px;"><i style="letter-spacing:0.092px">Search </i><i style="letter-spacing:-0.084px">for </i><i style="letter-spacing:-0.297px">" </i><i style="letter-spacing:0.108px">returned </i><i style="letter-spacing:0.106px">75 </i><i style="letter-spacing:0.29px">results </i><i style="letter-spacing:-0.297px">" </i>took <i style="letter-spacing:0.596px">811ms</i></div>
<div class="c" style="left:923px;width:137px;padding-left:1px;"><i style="letter-spacing:0.062px">127.0.0.1/127.0.0.1 </i><i style="letter-spacing:-0.114px">10....</i></div>
<div class="c" style="left:1060px;width:98px;padding-left:1px;"></div>
<div class="c" style="left:1158px;width:60px;padding-left:1px;letter-spacing:0.326px;">811</div>
</div>
<div class="row" style="top:597px;background:#fff4cc;">
<div class="c" style="left:0px;width:75px;padding-left:23px;letter-spacing:0.332px;"><svg class="ticon" width="19" height="15" viewBox="0 0 19 15" style="left:1px;top:0"><defs><linearGradient id="wg" x1="0" y1="0" x2="0" y2="1"><stop offset="0" stop-color="#f2dc90"/><stop offset="0.5" stop-color="#ecc838"/><stop offset="0.85" stop-color="#e8c000"/><stop offset="1" stop-color="#c89a00"/></linearGradient><linearGradient id="wi" x1="0" y1="0" x2="0" y2="1"><stop offset="0" stop-color="#ffffff"/><stop offset="0.6" stop-color="#ffffff"/><stop offset="1" stop-color="#d8d8d8"/></linearGradient></defs><path d="M9 -0.4 L17.6 14.8 L0.4 14.8 Z" fill="url(#wg)"/><path d="M9 2.6 L15 12.9 L3 12.9 Z" fill="url(#wi)"/><text x="9" y="12.5" font-family="Liberation Sans, sans-serif" font-weight="bold" font-size="10.5" text-anchor="middle" fill="#2a2a2a">!</text></svg>System</div>
<div class="c" style="left:75px;width:150px;padding-left:1px;"><i style="letter-spacing:0.106px">15/05/14 </i><i style="letter-spacing:0.194px">15:52</i></div>
<div class="c" style="left:225px;width:100px;padding-left:1px;letter-spacing:0.463px;">admin</div>
<div class="c" style="left:325px;width:60px;padding-left:5px;"></div>
<div class="c" style="left:385px;width:88px;padding-left:1px;letter-spacing:0.328px;">Login</div>
<div class="c" style="left:473px;width:113px;padding-left:1px;letter-spacing:0.328px;">Login</div>
<div class="c" style="left:586px;width:337px;padding-left:1px;"><i style="letter-spacing:0.266px">User </i><i style="letter-spacing:0.33px">admin </i><i style="letter-spacing:0.233px">logged </i><i style="letter-spacing:0.33px">in</i></div>
<div class="c" style="left:923px;width:137px;padding-left:1px;"><i style="letter-spacing:0.062px">127.0.0.1/127.0.0.1 </i><i style="letter-spacing:-0.114px">10....</i></div>
<div class="c" style="left:1060px;width:98px;padding-left:1px;"></div>
<div class="c" style="left:1158px;width:60px;padding-left:1px;"></div>
</div>
<div class="row" style="top:613px;background:#fff4cc;">
<div class="c" style="left:0px;width:75px;padding-left:23px;letter-spacing:0.332px;"><svg class="ticon" width="19" height="15" viewBox="0 0 19 15" style="left:1px;top:0"><defs><linearGradient id="wg" x1="0" y1="0" x2="0" y2="1"><stop offset="0" stop-color="#f2dc90"/><stop offset="0.5" stop-color="#ecc838"/><stop offset="0.85" stop-color="#e8c000"/><stop offset="1" stop-color="#c89a00"/></linearGradient><linearGradient id="wi" x1="0" y1="0" x2="0" y2="1"><stop offset="0" stop-color="#ffffff"/><stop offset="0.6" stop-color="#ffffff"/><stop offset="1" stop-color="#d8d8d8"/></linearGradient></defs><path d="M9 -0.4 L17.6 14.8 L0.4 14.8 Z" fill="url(#wg)"/><path d="M9 2.6 L15 12.9 L3 12.9 Z" fill="url(#wi)"/><text x="9" y="12.5" font-family="Liberation Sans, sans-serif" font-weight="bold" font-size="10.5" text-anchor="middle" fill="#2a2a2a">!</text></svg>System</div>
<div class="c" style="left:75px;width:150px;padding-left:1px;"><i style="letter-spacing:0.106px">15/05/14 </i><i style="letter-spacing:0.194px">15:50</i></div>
<div class="c" style="left:225px;width:100px;padding-left:1px;letter-spacing:0.332px;">System</div>
<div class="c" style="left:325px;width:60px;padding-left:5px;"></div>
<div class="c" style="left:385px;width:88px;padding-left:1px;letter-spacing:0.328px;">Login</div>
<div class="c" style="left:473px;width:113px;padding-left:1px;letter-spacing:0.328px;">Login</div>
<div class="c" style="left:586px;width:337px;padding-left:1px;"><i style="letter-spacing:0.217px">Login </i><i style="letter-spacing:0.14px">failed </i><i style="letter-spacing:-0.084px">for </i><i style="letter-spacing:0.264px">user </i><i style="letter-spacing:0.217px">guido </i><i style="letter-spacing:0.133px">from </i><i style="letter-spacing:0.11px">Host: </i><i style="letter-spacing:0.128px">10.14.1.27</i></div>
<div class="c" style="left:923px;width:137px;padding-left:1px;"><i style="letter-spacing:0.062px">127.0.0.1/127.0.0.1 </i><i style="letter-spacing:-0.114px">10....</i></div>
<div class="c" style="left:1060px;width:98px;padding-left:1px;"></div>
<div class="c" style="left:1158px;width:60px;padding-left:1px;"></div>
</div>
<div class="row" style="top:629px;background:#fff4cc;">
<div class="c" style="left:0px;width:75px;padding-left:23px;letter-spacing:0.332px;"><svg class="ticon" width="19" height="15" viewBox="0 0 19 15" style="left:1px;top:0"><defs><linearGradient id="wg" x1="0" y1="0" x2="0" y2="1"><stop offset="0" stop-color="#f2dc90"/><stop offset="0.5" stop-color="#ecc838"/><stop offset="0.85" stop-color="#e8c000"/><stop offset="1" stop-color="#c89a00"/></linearGradient><linearGradient id="wi" x1="0" y1="0" x2="0" y2="1"><stop offset="0" stop-color="#ffffff"/><stop offset="0.6" stop-color="#ffffff"/><stop offset="1" stop-color="#d8d8d8"/></linearGradient></defs><path d="M9 -0.4 L17.6 14.8 L0.4 14.8 Z" fill="url(#wg)"/><path d="M9 2.6 L15 12.9 L3 12.9 Z" fill="url(#wi)"/><text x="9" y="12.5" font-family="Liberation Sans, sans-serif" font-weight="bold" font-size="10.5" text-anchor="middle" fill="#2a2a2a">!</text></svg>System</div>
<div class="c" style="left:75px;width:150px;padding-left:1px;"><i style="letter-spacing:0.106px">15/05/14 </i><i style="letter-spacing:0.194px">15:36</i></div>
<div class="c" style="left:225px;width:100px;padding-left:1px;letter-spacing:0.396px;">gecam</div>
<div class="c" style="left:325px;width:60px;padding-left:5px;"></div>
<div class="c" style="left:385px;width:88px;padding-left:1px;letter-spacing:0.328px;">Login</div>
<div class="c" style="left:473px;width:113px;padding-left:1px;letter-spacing:0.328px;">Login</div>
<div class="c" style="left:586px;width:337px;padding-left:1px;"><i style="letter-spacing:0.217px">Login </i><i style="letter-spacing:0.14px">failed </i><i style="letter-spacing:-0.084px">for </i><i style="letter-spacing:0.264px">user </i><i style="letter-spacing:0.33px">admin </i><i style="letter-spacing:0.133px">from </i><i style="letter-spacing:0.11px">Host: </i><i style="letter-spacing:0.146px">10.30.2.142</i></div>
<div class="c" style="left:923px;width:137px;padding-left:1px;"><i style="letter-spacing:0.062px">127.0.0.1/127.0.0.1 </i><i style="letter-spacing:-0.114px">10....</i></div>
<div class="c" style="left:1060px;width:98px;padding-left:1px;"></div>
<div class="c" style="left:1158px;width:60px;padding-left:1px;"></div>
</div>
<div class="row" style="top:645px;background:#fff4cc;">
<div class="c" style="left:0px;width:75px;padding-left:23px;letter-spacing:0.332px;"><svg class="ticon" width="19" height="15" viewBox="0 0 19 15" style="left:1px;top:0"><defs><linearGradient id="wg" x1="0" y1="0" x2="0" y2="1"><stop offset="0" stop-color="#f2dc90"/><stop offset="0.5" stop-color="#ecc838"/><stop offset="0.85" stop-color="#e8c000"/><stop offset="1" stop-color="#c89a00"/></linearGradient><linearGradient id="wi" x1="0" y1="0" x2="0" y2="1"><stop offset="0" stop-color="#ffffff"/><stop offset="0.6" stop-color="#ffffff"/><stop offset="1" stop-color="#d8d8d8"/></linearGradient></defs><path d="M9 -0.4 L17.6 14.8 L0.4 14.8 Z" fill="url(#wg)"/><path d="M9 2.6 L15 12.9 L3 12.9 Z" fill="url(#wi)"/><text x="9" y="12.5" font-family="Liberation Sans, sans-serif" font-weight="bold" font-size="10.5" text-anchor="middle" fill="#2a2a2a">!</text></svg>System</div>
<div class="c" style="left:75px;width:150px;padding-left:1px;"><i style="letter-spacing:0.106px">15/05/14 </i><i style="letter-spacing:0.194px">15:36</i></div>
<div class="c" style="left:225px;width:100px;padding-left:1px;letter-spacing:0.396px;">gecam</div>
<div class="c" style="left:325px;width:60px;padding-left:5px;"></div>
<div class="c" style="left:385px;width:88px;padding-left:1px;letter-spacing:0.328px;">Login</div>
<div class="c" style="left:473px;width:113px;padding-left:1px;letter-spacing:0.328px;">Login</div>
<div class="c" style="left:586px;width:337px;padding-left:1px;"><i style="letter-spacing:0.217px">Login </i><i style="letter-spacing:0.14px">failed </i><i style="letter-spacing:0.052px">three </i><i style="letter-spacing:0.333px">times </i><i style="letter-spacing:0.133px">from </i><i style="letter-spacing:0.11px">Host: </i><i style="letter-spacing:0.146px">10.30.2.142</i></div>
<div class="c" style="left:923px;width:137px;padding-left:1px;"><i style="letter-spacing:0.062px">127.0.0.1/127.0.0.1 </i><i style="letter-spacing:-0.114px">10....</i></div>
<div class="c" style="left:1060px;width:98px;padding-left:1px;"></div>
<div class="c" style="left:1158px;width:60px;padding-left:1px;"></div>
</div>
<div class="row" style="top:661px;background:#fff4cc;">
<div class="c" style="left:0px;width:75px;padding-left:23px;letter-spacing:0.332px;"><svg class="ticon" width="19" height="15" viewBox="0 0 19 15" style="left:1px;top:0"><defs><linearGradient id="wg" x1="0" y1="0" x2="0" y2="1"><stop offset="0" stop-color="#f2dc90"/><stop offset="0.5" stop-color="#ecc838"/><stop offset="0.85" stop-color="#e8c000"/><stop offset="1" stop-color="#c89a00"/></linearGradient><linearGradient id="wi" x1="0" y1="0" x2="0" y2="1"><stop offset="0" stop-color="#ffffff"/><stop offset="0.6" stop-color="#ffffff"/><stop offset="1" stop-color="#d8d8d8"/></linearGradient></defs><path d="M9 -0.4 L17.6 14.8 L0.4 14.8 Z" fill="url(#wg)"/><path d="M9 2.6 L15 12.9 L3 12.9 Z" fill="url(#wi)"/><text x="9" y="12.5" font-family="Liberation Sans, sans-serif" font-weight="bold" font-size="10.5" text-anchor="middle" fill="#2a2a2a">!</text></svg>System</div>
<div class="c" style="left:75px;width:150px;padding-left:1px;"><i style="letter-spacing:0.106px">15/05/14 </i><i style="letter-spacing:0.194px">15:36</i></div>
<div class="c" style="left:225px;width:100px;padding-left:1px;letter-spacing:0.332px;">System</div>
<div class="c" style="left:325px;width:60px;padding-left:5px;"></div>
<div class="c" style="left:385px;width:88px;padding-left:1px;letter-spacing:0.328px;">Login</div>
<div class="c" style="left:473px;width:113px;padding-left:1px;letter-spacing:0.328px;">Login</div>
<div class="c" style="left:586px;width:337px;padding-left:1px;"><i style="letter-spacing:0.217px">Login </i><i style="letter-spacing:0.14px">failed </i><i style="letter-spacing:-0.084px">for </i><i style="letter-spacing:0.264px">user </i><i style="letter-spacing:0.33px">admin </i><i style="letter-spacing:0.133px">from </i><i style="letter-spacing:0.11px">Host: </i><i style="letter-spacing:0.146px">10.30.2.142</i></div>
<div class="c" style="left:923px;width:137px;padding-left:1px;"><i style="letter-spacing:0.062px">127.0.0.1/127.0.0.1 </i><i style="letter-spacing:-0.114px">10....</i></div>
<div class="c" style="left:1060px;width:98px;padding-left:1px;"></div>
<div class="c" style="left:1158px;width:60px;padding-left:1px;"></div>
</div>
<div class="row" style="top:677px;background:#fff4cc;">
<div class="c" style="left:0px;width:75px;padding-left:23px;letter-spacing:0.332px;"><svg class="ticon" width="19" height="15" viewBox="0 0 19 15" style="left:1px;top:0"><defs><linearGradient id="wg" x1="0" y1="0" x2="0" y2="1"><stop offset="0" stop-color="#f2dc90"/><stop offset="0.5" stop-color="#ecc838"/><stop offset="0.85" stop-color="#e8c000"/><stop offset="1" stop-color="#c89a00"/></linearGradient><linearGradient id="wi" x1="0" y1="0" x2="0" y2="1"><stop offset="0" stop-color="#ffffff"/><stop offset="0.6" stop-color="#ffffff"/><stop offset="1" stop-color="#d8d8d8"/></linearGradient></defs><path d="M9 -0.4 L17.6 14.8 L0.4 14.8 Z" fill="url(#wg)"/><path d="M9 2.6 L15 12.9 L3 12.9 Z" fill="url(#wi)"/><text x="9" y="12.5" font-family="Liberation Sans, sans-serif" font-weight="bold" font-size="10.5" text-anchor="middle" fill="#2a2a2a">!</text></svg>System</div>
<div class="c" style="left:75px;width:150px;padding-left:1px;"><i style="letter-spacing:0.106px">15/05/14 </i><i style="letter-spacing:0.194px">15:36</i></div>
<div class="c" style="left:225px;width:100px;padding-left:1px;letter-spacing:0.332px;">System</div>
<div class="c" style="left:325px;width:60px;padding-left:5px;"></div>
<div class="c" style="left:385px;width:88px;padding-left:1px;letter-spacing:0.328px;">Login</div>
<div class="c" style="left:473px;width:113px;padding-left:1px;letter-spacing:0.328px;">Login</div>
<div class="c" style="left:586px;width:337px;padding-left:1px;"><i style="letter-spacing:0.217px">Login </i><i style="letter-spacing:0.14px">failed </i><i style="letter-spacing:-0.084px">for </i><i style="letter-spacing:0.264px">user </i><i style="letter-spacing:0.217px">guido </i><i style="letter-spacing:0.133px">from </i><i style="letter-spacing:0.11px">Host: </i><i style="letter-spacing:0.146px">10.30.2.142</i></div>
<div class="c" style="left:923px;width:137px;padding-left:1px;"><i style="letter-spacing:0.062px">127.0.0.1/127.0.0.1 </i><i style="letter-spacing:-0.114px">10....</i></div>
<div class="c" style="left:1060px;width:98px;padding-left:1px;"></div>
<div class="c" style="left:1158px;width:60px;padding-left:1px;"></div>
</div>
<div class="row" style="top:693px;background:#fff4cc;">
<div class="c" style="left:0px;width:75px;padding-left:23px;letter-spacing:0.332px;"><svg class="ticon" width="19" height="15" viewBox="0 0 19 15" style="left:1px;top:0"><defs><linearGradient id="wg" x1="0" y1="0" x2="0" y2="1"><stop offset="0" stop-color="#f2dc90"/><stop offset="0.5" stop-color="#ecc838"/><stop offset="0.85" stop-color="#e8c000"/><stop offset="1" stop-color="#c89a00"/></linearGradient><linearGradient id="wi" x1="0" y1="0" x2="0" y2="1"><stop offset="0" stop-color="#ffffff"/><stop offset="0.6" stop-color="#ffffff"/><stop offset="1" stop-color="#d8d8d8"/></linearGradient></defs><path d="M9 -0.4 L17.6 14.8 L0.4 14.8 Z" fill="url(#wg)"/><path d="M9 2.6 L15 12.9 L3 12.9 Z" fill="url(#wi)"/><text x="9" y="12.5" font-family="Liberation Sans, sans-serif" font-weight="bold" font-size="10.5" text-anchor="middle" fill="#2a2a2a">!</text></svg>System</div>
<div class="c" style="left:75px;width:150px;padding-left:1px;"><i style="letter-spacing:0.106px">15/05/14 </i><i style="letter-spacing:0.194px">15:35</i></div>
<div class="c" style="left:225px;width:100px;padding-left:1px;letter-spacing:0.396px;">gecam</div>
<div class="c" style="left:325px;width:60px;padding-left:5px;"></div>
<div class="c" style="left:385px;width:88px;padding-left:1px;letter-spacing:0.328px;">Login</div>
<div class="c" style="left:473px;width:113px;padding-left:1px;letter-spacing:0.328px;">Login</div>
<div class="c" style="left:586px;width:337px;padding-left:1px;"><i style="letter-spacing:0.217px">Login </i><i style="letter-spacing:0.14px">failed </i><i style="letter-spacing:0.052px">three </i><i style="letter-spacing:0.333px">times </i><i style="letter-spacing:0.133px">from </i><i style="letter-spacing:0.11px">Host: </i><i style="letter-spacing:0.146px">10.30.2.142</i></div>
<div class="c" style="left:923px;width:137px;padding-left:1px;"><i style="letter-spacing:0.062px">127.0.0.1/127.0.0.1 </i><i style="letter-spacing:-0.114px">10....</i></div>
<div class="c" style="left:1060px;width:98px;padding-left:1px;"></div>
<div class="c" style="left:1158px;width:60px;padding-left:1px;"></div>
</div>
<div class="abs" style="left:1228px;top:165px;width:15px;height:540px;background:#eee;"></div>
<div class="abs" style="left:1228px;top:165px;width:15px;height:16px;box-sizing:border-box;background:#eee;border-left:1px solid #7a8a99;border-bottom:1px solid #7a8a99;"><svg class="abs" style="left:3px;top:5px" width="9" height="5"><path d="M0 4.5 H8.6 L4.3 0.2 Z" fill="#333"/></svg></div>
<div class="abs" style="left:1228px;top:181px;width:15px;height:640px;box-sizing:border-box;border:1px solid #6382bf;border-right:none;background:linear-gradient(to right,#c6d8ea 0%,#dde8f3 10%,#ffffff 36%,#dde8f3 62%,#bdd2e7 100%);"></div>
<div class="abs" style="left:1232px;top:495px;width:9px;height:1px;background:#6382bf;"></div>
<div class="abs" style="left:1233px;top:496px;width:9px;height:1px;background:#fff;"></div>
<div class="abs" style="left:1232px;top:497px;width:9px;height:1px;background:#6382bf;"></div>
<div class="abs" style="left:1233px;top:498px;width:9px;height:1px;background:#fff;"></div>
<div class="abs" style="left:1232px;top:499px;width:9px;height:1px;background:#6382bf;"></div>
<div class="abs" style="left:1233px;top:500px;width:9px;height:1px;background:#fff;"></div>
<div class="abs" style="left:754px;top:179px;width:402px;height:83px;background:#fff;"></div>
<div class="abs" style="left:755px;top:179px;width:400px;height:81px;box-sizing:border-box;border:1px solid #000;background:#fff;"><div class="abs" style="left:0;top:0;width:398px;height:16px;background:#eee;border-top:1px solid #fff;box-sizing:border-box;"><span class="abs b" style="left:0.5px;top:1px;line-height:15px;white-space:nowrap;letter-spacing:0.024px;">QuickPreview</span></div><div class="abs" style="left:0;top:16px;width:397px;height:62px;box-sizing:border-box;border:1px solid #7a8a99;background:#fff;box-shadow:1px 1px 0 #fff;"><span class="abs" style="left:0px;top:2px;line-height:14px;white-space:pre;">Error <i style="letter-spacing:0.22px">while </i><i style="letter-spacing:0.108px">creating </i>the <i style="letter-spacing:0.065px">file </i><i style="letter-spacing:0.08px">backup: </i>The <i style="letter-spacing:0.081px">network </i><i style="letter-spacing:0.062px">path </i><i style="letter-spacing:0.332px">was </i>not <i style="letter-spacing:0.194px">found</i></span></div></div>
<div class="abs" style="left:1px;top:701px;width:1253px;height:1px;background:#7a8a99;"></div>
</body></html>
